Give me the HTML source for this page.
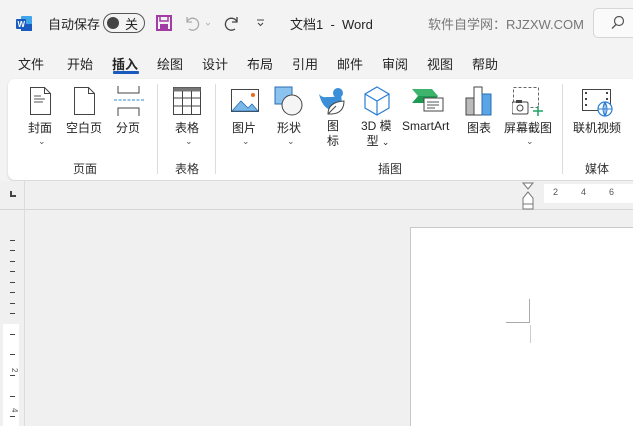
<!DOCTYPE html><html><head><meta charset="utf-8"><style>
*{margin:0;padding:0;box-sizing:border-box}
body{width:633px;height:426px;overflow:hidden;background:#f3f3f3;font-family:"Liberation Sans","Noto Sans CJK SC",sans-serif;color:#242424;position:relative}
.a{position:absolute;white-space:nowrap}
.t{font-size:13px}
.l{font-size:12px;text-align:center}
.g{font-size:12px;color:#333}
.sep{position:absolute;width:1px;background:#dcdcdc;top:84px;height:90px}
.ch{font-size:9px;color:#555}
</style></head><body>
<svg class="a" style="left:16px;top:15px" width="17" height="17"><rect x="5" y="1" width="11" height="15" rx="1" fill="#41a5ee"/><rect x="5" y="9" width="11" height="7" fill="#185abd"/><rect x="0" y="4" width="10" height="10" rx="1" fill="#185abd"/><text x="1.5" y="12" font-size="8" font-weight="bold" fill="#fff" font-family="Liberation Sans">W</text></svg>
<div class="a t" style="left:48px;top:14px">自动保存</div>
<div class="a" style="left:103px;top:13px;width:42px;height:20px;border:1px solid #555;border-radius:10px"></div>
<div class="a" style="left:107px;top:17px;width:12px;height:12px;border-radius:6px;background:#444"></div>
<div class="a t" style="left:125px;top:14px">关</div>
<svg class="a" style="left:156px;top:15px" width="16" height="16"><rect x="1" y="1" width="14" height="14" fill="none" stroke="#a33ba5" stroke-width="2"/><rect x="4" y="1" width="8" height="5" fill="none" stroke="#a33ba5" stroke-width="1.5"/><rect x="4" y="9" width="8" height="6" fill="#a33ba5"/></svg>
<svg class="a" style="left:184px;top:14px" width="30" height="18"><path d="M3 3v5h5M3 8a6 6 0 1 1 2 7" fill="none" stroke="#aaa" stroke-width="1.3"/><path d="M22 9l2 2 2-2" fill="none" stroke="#bbb"/></svg>
<svg class="a" style="left:223px;top:14px" width="18" height="18"><path d="M14 3v5h-5M14 8a6 6 0 1 0-2 7" fill="none" stroke="#444" stroke-width="1.3"/></svg>
<svg class="a" style="left:256px;top:19px" width="10" height="8"><path d="M1 1h7M2 4l2.5 2.5L7 4" fill="none" stroke="#444"/></svg>
<div class="a t" style="left:290px;top:14px">文档1 &nbsp;- &nbsp;Word</div>
<div class="a t" style="left:428px;top:14px;color:#777">软件自学网：RJZXW.COM</div>
<div class="a" style="left:593px;top:8px;width:45px;height:30px;border:1px solid #d6d6d6;border-radius:5px;background:#fafafa"></div>
<svg class="a" style="left:611px;top:15px" width="14" height="16"><circle cx="8" cy="6" r="4.5" fill="none" stroke="#555" stroke-width="1.2"/><path d="M5 9.5l-4 4" stroke="#555" stroke-width="1.3"/></svg>
<div class="a t" style="left:18px;top:54px">文件</div>
<div class="a t" style="left:67px;top:54px">开始</div>
<div class="a t" style="left:112px;top:54px;font-weight:bold">插入</div>
<div class="a" style="left:113px;top:71px;width:26px;height:3px;background:#185abd;border-radius:1px"></div>
<div class="a t" style="left:157px;top:54px">绘图</div>
<div class="a t" style="left:202px;top:54px">设计</div>
<div class="a t" style="left:247px;top:54px">布局</div>
<div class="a t" style="left:292px;top:54px">引用</div>
<div class="a t" style="left:337px;top:54px">邮件</div>
<div class="a t" style="left:382px;top:54px">审阅</div>
<div class="a t" style="left:427px;top:54px">视图</div>
<div class="a t" style="left:472px;top:54px">帮助</div>
<div class="a" style="left:8px;top:79px;width:640px;height:101px;background:#fff;border-radius:7px;box-shadow:0 1px 2px rgba(0,0,0,.15)"></div>
<svg class="a" style="left:29px;top:86px" width="24" height="30"><path d="M1.5 1.5h14l6 6v21h-20z M15.5 1.5v6h6" fill="none" stroke="#444" stroke-width="1"/><path d="M5 10h7M5 13h11M5 16h9" stroke="#555"/></svg>
<div class="a l" style="left:28px;top:119px">封面</div><div class="a ch" style="left:38px;top:136px">⌄</div>
<svg class="a" style="left:73px;top:86px" width="24" height="30"><path d="M1.5 1.5h14l6 6v21h-20z M15.5 1.5v6h6" fill="none" stroke="#444"/></svg>
<div class="a l" style="left:66px;top:119px">空白页</div>
<svg class="a" style="left:114px;top:86px" width="30" height="30"><path d="M4 0v7h21V0M4 30v-8h21v8" fill="none" stroke="#444"/><path d="M0 14h30" stroke="#2a8ad4" stroke-dasharray="3 1.5"/></svg>
<div class="a l" style="left:116px;top:119px">分页</div>
<div class="a g" style="left:73px;top:160px">页面</div>
<div class="sep" style="left:157px"></div>
<svg class="a" style="left:172px;top:86px" width="30" height="30"><rect x="1.5" y="1.5" width="27" height="27" fill="none" stroke="#444"/><rect x="1.5" y="1.5" width="27" height="4" fill="#777"/><path d="M1.5 12h27M1.5 20h27M10.5 5v24M19.5 5v24" stroke="#444"/></svg>
<div class="a l" style="left:175px;top:119px">表格</div><div class="a ch" style="left:185px;top:136px">⌄</div>
<div class="a g" style="left:175px;top:160px">表格</div>
<div class="sep" style="left:215px"></div>
<svg class="a" style="left:231px;top:89px" width="28" height="24"><rect x="0.5" y="0.5" width="27" height="22" fill="#fff" stroke="#444"/><path d="M1 22l9-10 7 7 4-4 6 7z" fill="#7ab8e8" stroke="#2a6cb0" stroke-width=".8"/><circle cx="22" cy="6" r="2" fill="#e86b1a"/></svg>
<div class="a l" style="left:232px;top:119px">图片</div><div class="a ch" style="left:242px;top:136px">⌄</div>
<svg class="a" style="left:274px;top:86px" width="30" height="30"><rect x="1" y="1" width="17" height="17" fill="#8ac2f0" stroke="#2a6cb0"/><circle cx="18" cy="19" r="10" fill="#f5f5f5" stroke="#444"/></svg>
<div class="a l" style="left:277px;top:119px">形状</div><div class="a ch" style="left:287px;top:136px">⌄</div>
<svg class="a" style="left:318px;top:86px" width="30" height="30"><circle cx="20" cy="7" r="5" fill="#3a8fd8"/><path d="M1 8q3 4 8 3 8 0 14-1 3 10-8 14-10 0-14-16z" fill="#3a8fd8"/><path d="M10 28q0-12 16-13 0 12-12 13z" fill="#fff" stroke="#444"/><path d="M10 28l8-8" stroke="#444"/></svg>
<div class="a l" style="left:327px;top:119px;line-height:15px">图<br>标</div>
<svg class="a" style="left:363px;top:86px" width="28" height="30"><path d="M14 1L26 8v14l-12 7L2 22V8z M2 8l12 7 12-7 M14 15v14" fill="none" stroke="#2a7fd4" stroke-width="1.2"/></svg>
<div class="a l" style="left:361px;top:119px;line-height:15px">3D 模<br>&nbsp;型 <span style="font-size:9px">⌄</span></div>
<svg class="a" style="left:412px;top:88px" width="32" height="26"><path d="M0 1h20l6 7H6z" fill="#3db36b"/><path d="M6 8h20l-6 7H0z" fill="#1e9b52"/><rect x="12" y="10" width="19" height="13" fill="#fff" stroke="#444"/><path d="M15 14h12M15 17h12M15 20h8" stroke="#555"/></svg>
<div class="a l" style="left:402px;top:119px">SmartArt</div>
<svg class="a" style="left:465px;top:86px" width="28" height="30"><rect x="1" y="12" width="8" height="17" fill="#bbb" stroke="#444"/><rect x="9" y="1" width="8" height="28" fill="#fff" stroke="#444"/><rect x="17" y="8" width="9" height="21" fill="#5aa5e6" stroke="#2a6cb0"/></svg>
<div class="a l" style="left:467px;top:119px">图表</div>
<svg class="a" style="left:512px;top:86px" width="34" height="30"><rect x="1.5" y="1.5" width="25" height="20" fill="none" stroke="#666" stroke-dasharray="3 2"/><rect x="0" y="16" width="16" height="12" rx="1.5" fill="#fff" stroke="#444"/><rect x="4" y="14" width="6" height="3" fill="#444"/><circle cx="8" cy="22" r="3" fill="none" stroke="#444"/><path d="M26 20v10M21 25h10" stroke="#21a366" stroke-width="1.5"/></svg>
<div class="a l" style="left:504px;top:119px">屏幕截图</div><div class="a ch" style="left:526px;top:136px">⌄</div>
<div class="a g" style="left:378px;top:160px">插图</div>
<div class="sep" style="left:562px"></div>
<svg class="a" style="left:582px;top:89px" width="32" height="28"><rect x="0.5" y="0.5" width="28" height="21" fill="#fff" stroke="#444"/><path d="M4 3v2M4 9v2M4 15v2M25 3v2M25 9v2" stroke="#444" stroke-width="2"/><circle cx="23" cy="20" r="7" fill="#fff" stroke="#2a7fd4" stroke-width="1.2"/><path d="M16 20h14M23 13v14M23 13q-4 7 0 14M23 13q4 7 0 14" fill="none" stroke="#2a7fd4"/></svg>
<div class="a l" style="left:573px;top:119px">联机视频</div>
<div class="a g" style="left:585px;top:160px">媒体</div>
<div class="a" style="left:0;top:181px;width:633px;height:245px;background:#f0f0f0"></div>
<div class="a" style="left:0;top:209px;width:633px;height:1px;background:#d6d6d6"></div>
<div class="a" style="left:24px;top:181px;width:1px;height:245px;background:#dcdcdc"></div>
<div class="a" style="left:10px;top:191px;width:2px;height:6px;background:#444"></div>
<div class="a" style="left:10px;top:195px;width:6px;height:2px;background:#444"></div>
<div class="a" style="left:544px;top:184px;width:89px;height:19px;background:#fff"></div>
<svg class="a" style="left:522px;top:182px" width="14" height="28"><path d="M1 1h10L6 7zM6 10L1 16v6h10v-6z M1 22v5h10v-5" fill="#fff" stroke="#777"/></svg>
<div class="a" style="left:553px;top:187px;font-size:9px;color:#555">2</div>
<div class="a" style="left:581px;top:187px;font-size:9px;color:#555">4</div>
<div class="a" style="left:609px;top:187px;font-size:9px;color:#555">6</div>
<div class="a" style="left:3px;top:324px;width:16px;height:102px;background:#fff"></div>
<svg class="a" style="left:8px;top:240px" width="10" height="186"><g stroke="#444"><path d="M2 .5h5M2 10.5h5M2 21.5h5M2 31.5h5M2 42.5h5M2 52.5h5M2 63.5h5M2 73.5h5M2 94.5h5M2 114.5h5M2 135.5h5M2 156.5h5M2 176.5h5"/></g><text x="8" y="124" font-size="8" fill="#555" transform="rotate(90 4 124)" font-family="Liberation Sans">2</text><text x="8" y="164" font-size="8" fill="#555" transform="rotate(90 4 164)" font-family="Liberation Sans">4</text></svg>
<div class="a" style="left:410px;top:227px;width:223px;height:199px;background:#fff;border-top:1px solid #c8c8c8;border-left:1px solid #c8c8c8"></div>
<div class="a" style="left:506px;top:322px;width:24px;height:1px;background:#aaa"></div>
<div class="a" style="left:529px;top:299px;width:1px;height:24px;background:#aaa"></div>
<div class="a" style="left:530px;top:325px;width:1px;height:18px;background:#ccc"></div>
</body></html>
